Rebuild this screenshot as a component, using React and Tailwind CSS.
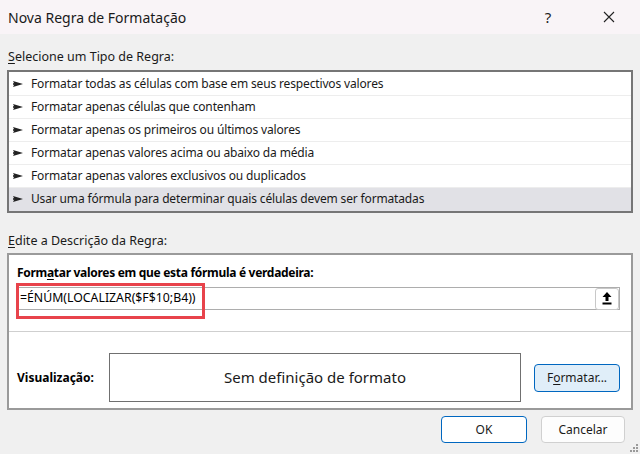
import React from "react"

const rules = [
  "Formatar todas as células com base em seus respectivos valores",
  "Formatar apenas células que contenham",
  "Formatar apenas os primeiros ou últimos valores",
  "Formatar apenas valores acima ou abaixo da média",
  "Formatar apenas valores exclusivos ou duplicados",
  "Usar uma fórmula para determinar quais células devem ser formatadas",
]

function UploadIcon() {
  return (
    <svg width="10" height="13" viewBox="0 0 10 13">
      <polygon points="5,0 9.5,5 6.5,5 6.5,9 3.5,9 3.5,5 0.5,5" fill="#000" />
      <rect x="0.5" y="10.5" width="9" height="2" fill="#000" />
    </svg>
  )
}

function RuleArrow() {
  return (
    <svg width="10" height="8" viewBox="0 0 10 8" className="mr-[8px]">
      <polygon points="0,1 10,4 0,7 1.5,4" fill="#222" />
      <rect x="0" y="3.2" width="3" height="1.6" fill="#222" />
    </svg>
  )
}

export default function App() {
  const selected = 5

  return (
    <div
      className="relative w-[640px] h-[454px] bg-[#f0f0f0] flex flex-col overflow-hidden text-[#000]"
      style={{ fontFamily: '"Noto Sans", "Open Sans", sans-serif' }}
    >
      {/* Title bar */}
      <div className="h-[34px] bg-[#f9f4f7] flex items-center pl-2 shrink-0">
        <span className="text-[14px] text-[#1a1a1a]">Nova Regra de Formatação</span>
        <span className="ml-auto w-[14px] text-center text-[15px] text-[#222] mr-[48px]">?</span>
        <svg width="12" height="12" viewBox="0 0 12 12" className="mr-[25px]">
          <path d="M1 1 L11 11 M11 1 L1 11" stroke="#222" strokeWidth="1.1" />
        </svg>
      </div>

      <div className="px-[7px]">
        {/* Rule type */}
        <div className="mt-[13px] h-[20px] leading-[20px] pl-px text-[12.5px] text-[#1a1a1a]">
          <span className="underline underline-offset-2">S</span>elecione um Tipo de Regra:
        </div>
        <div className="mt-[3px] border-2 border-[#767676] bg-white pt-px">
          {rules.map((rule, i) => (
            <div
              key={rule}
              className={
                "h-[23px] flex items-center pl-[4px] text-[12px] tracking-[-0.15px] text-[#1a1a1a] border-b " +
                (i === selected ? "bg-[#e1e1e6] border-[#e1e1e6]" : "border-[#ededed]")
              }
            >
              <RuleArrow />
              <span>{rule}</span>
            </div>
          ))}
        </div>

        {/* Rule description */}
        <div className="mt-[18px] h-[20px] leading-[20px] pl-px text-[12.5px] text-[#1a1a1a]">
          <span className="underline underline-offset-2">E</span>dite a Descrição da Regra:
        </div>
        <div className="relative mt-[2px] h-[157px] border-2 border-[#9a9a9a] bg-white">
          <div className="pl-[8px] pr-[11px] pt-[8px]">
            <div className="h-[20px] leading-[20px] text-[12px] tracking-[-0.3px] font-bold">
              Form<span className="underline underline-offset-2">a</span>tar valores em que esta fórmula é verdadeira:
            </div>
            <div className="mt-[4px] h-[23px] border border-[#adadad] flex items-center">
              <span className="pl-[2px] text-[12.3px]">=ÉNÚM(LOCALIZAR($F$10;B4))</span>
              <div className="ml-auto h-[22px] w-[24px] border border-[#c8c8c8] rounded-[3px] bg-white flex items-center justify-center">
                <UploadIcon />
              </div>
            </div>
          </div>
          <div className="mt-[21px] h-px bg-[#cfcfcf]" />
          <div className="mt-[21px] pl-[8px] pr-[11px] flex items-center">
            <span className="w-[92px] text-[12px] font-bold">Visualização:</span>
            <div className="w-[412px] h-[49px] border border-[#707070] flex items-center justify-center text-[15px] text-[#1a1a1a]">
              Sem definição de formato
            </div>
            <button className="ml-auto h-[28px] w-[86px] rounded-[4px] border border-[#0067c0] bg-[#e0eef9] text-[12px] text-[#1a1a1a]">
              F<span className="underline underline-offset-2">o</span>rmatar...
            </button>
          </div>

          {/* highlight */}
          <div className="absolute left-[7px] top-[28px] w-[189px] h-[36px] border-[3px] border-[#e8434b]" />
        </div>
      </div>

      {/* Buttons */}
      <div className="mt-[6px] pr-[15px] flex justify-end gap-[14px]">
        <button className="h-[27px] w-[86px] rounded-[4px] border border-[#0067c0] bg-white text-[12px] text-[#1a1a1a]">
          OK
        </button>
        <button className="h-[27px] w-[84px] rounded-[4px] border border-[#d0d0d0] bg-[#fdfdfd] text-[12px] text-[#1a1a1a]">
          Cancelar
        </button>
      </div>

      {/* resize grip */}
      <div className="absolute right-[2px] bottom-[2px] w-[8px] h-[8px]">
        <div className="absolute right-0 bottom-0 w-[2px] h-[2px] bg-[#9a9a9a]" />
        <div className="absolute right-[3px] bottom-0 w-[2px] h-[2px] bg-[#9a9a9a]" />
        <div className="absolute right-[6px] bottom-0 w-[2px] h-[2px] bg-[#9a9a9a]" />
        <div className="absolute right-0 bottom-[3px] w-[2px] h-[2px] bg-[#9a9a9a]" />
        <div className="absolute right-[3px] bottom-[3px] w-[2px] h-[2px] bg-[#9a9a9a]" />
        <div className="absolute right-0 bottom-[6px] w-[2px] h-[2px] bg-[#9a9a9a]" />
      </div>
    </div>
  )
}
